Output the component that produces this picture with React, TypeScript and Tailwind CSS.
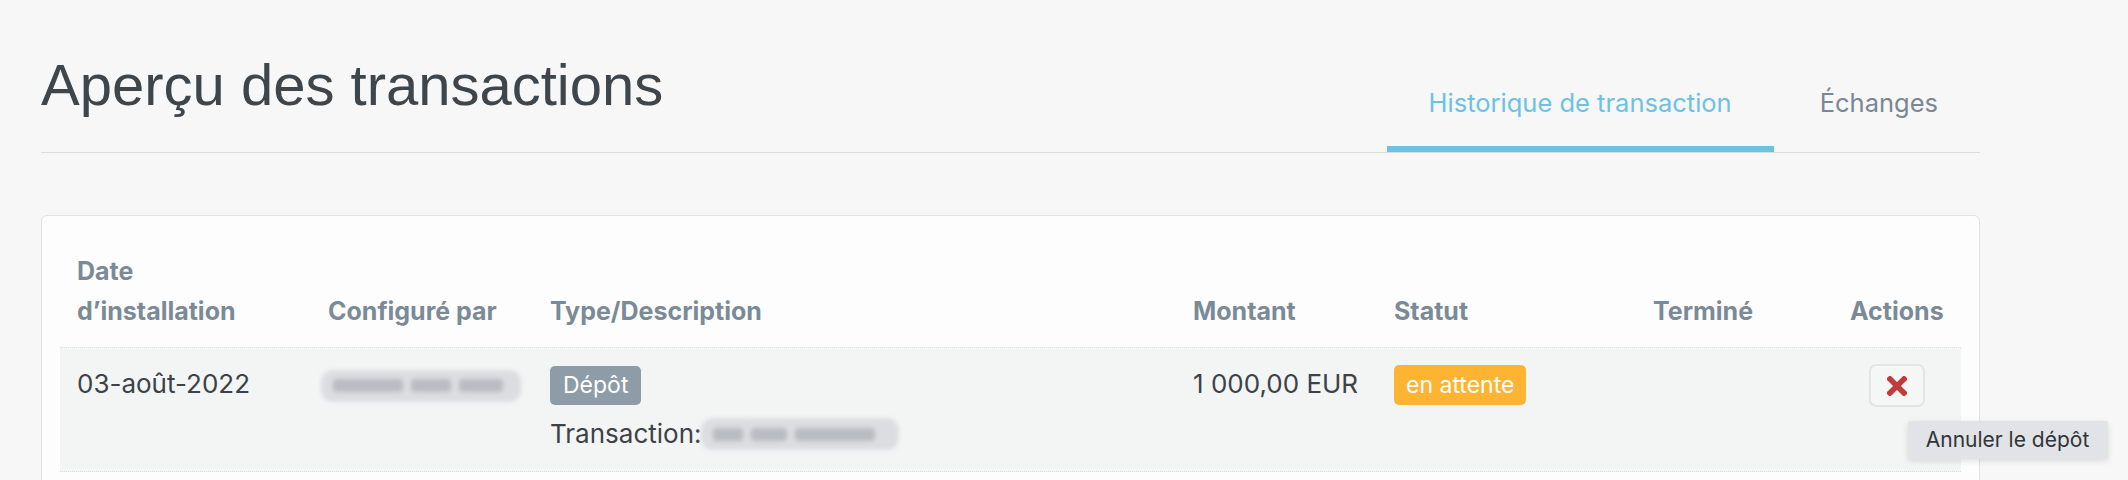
import React from "react";

function Blur({ w, bars }: { w: number; bars: number[] }) {
  return (
    <div className="relative inline-block align-middle" style={{ width: w, height: 32 }}>
      <div className="absolute inset-0 rounded-[12px] bg-[#dcdde0] blur-[2px]" />
      <div className="absolute inset-0 flex items-center gap-[8px] px-[12px]">
        {bars.map((b, i) => (
          <div key={i} className="h-[13px] rounded-[4px] bg-[#b9bcc1] blur-[2px]" style={{ width: b }} />
        ))}
      </div>
    </div>
  );
}

function CrossIcon() {
  return (
    <svg width="20" height="20" viewBox="0 0 20 20" aria-hidden="true">
      <path d="M3 3 L17 17 M17 3 L3 17" stroke="#c23a3a" strokeWidth="5.5" strokeLinecap="square" />
    </svg>
  );
}

export default function App() {
  const cols = "grid grid-cols-[251px_222px_643px_201px_259px_197px_127px]";
  return (
    <div className="min-h-screen bg-[#f7f7f7] pl-[41px] pr-[148px] pb-[40px] font-['Inter',sans-serif]">
      <div className="flex h-[153px] items-end justify-between border-b border-[#dcdcdc]">
        <h1 className="pb-[38px] font-['Liberation_Sans',sans-serif] text-[58px] font-normal leading-[58px] text-[#3e454b]">
          Aperçu des transactions
        </h1>
        <div className="flex gap-[4px] text-[25.5px] leading-[32px]">
          <div className="border-b-[6px] border-[#6ec1e4] px-[42px] pb-[27px] text-[#6ec1e4]">
            Historique de transaction
          </div>
          <div className="border-b-[6px] border-transparent px-[42px] pb-[27px] text-[#7a8794]">Échanges</div>
        </div>
      </div>

      <div className="mt-[62px] rounded-[6px] border border-[#e2e2e2] bg-[#fdfdfd] p-[18px] pb-[60px]">
        <div className={`${cols} items-end text-[25px] font-bold leading-[40px] text-[#7b8a97]`}>
          <div className="px-[17px] pb-[16px] pt-[17px]">
            <div>Date</div>
            <div>d’installation</div>
          </div>
          <div className="px-[17px] pb-[16px] pt-[17px]">Configuré par</div>
          <div className="px-[17px] pb-[16px] pt-[17px]">Type/Description</div>
          <div className="px-[17px] pb-[16px] pt-[17px]">Montant</div>
          <div className="px-[17px] pb-[16px] pt-[17px]">Statut</div>
          <div className="px-[17px] pb-[16px] pt-[17px]">Terminé</div>
          <div className="px-[17px] pb-[16px] pt-[17px] text-center">Actions</div>
        </div>

        <div
          className={`${cols} items-start border-y border-dotted border-[#dcdcdc] bg-[#f3f5f5] text-[26px] leading-[40px] text-[#3c4248]`}
        >
          <div className="px-[17px] pb-[16px] pt-[16px]">03-août-2022</div>
          <div className="px-[10px] pb-[16px] pt-[16px]">
            <Blur w={200} bars={[70, 40, 44]} />
          </div>
          <div className="px-[17px] pb-[17px] pt-[16px]">
            <span className="inline-block rounded-[5px] bg-[#8d9ca7] px-[13px] text-[23px] leading-[39px] text-white">
              Dépôt
            </span>
            <div className="mt-[9px] flex items-center">
              <span>Transaction:</span>
              <Blur w={198} bars={[30, 36, 80]} />
            </div>
          </div>
          <div className="px-[17px] pb-[16px] pt-[16px]">1 000,00 EUR</div>
          <div className="px-[17px] pb-[16px] pt-[16px]">
            <span className="inline-block rounded-[5px] bg-[#fdb432] px-[12px] text-[23px] leading-[40px] text-white">
              en attente
            </span>
          </div>
          <div className="px-[17px] pb-[16px] pt-[16px]" />
          <div className="flex justify-center px-[17px] pb-[16px] pt-[16px]">
            <div className="relative">
              <button className="flex h-[43px] w-[56px] items-center justify-center rounded-[7px] border-2 border-[#e3e4e5] bg-[#f5f6f6]">
                <CrossIcon />
              </button>
              <div className="absolute left-[39px] top-[57px] z-10 flex h-[38px] w-[200px] items-center justify-center rounded-[3px] bg-[#e2e3e6] text-[21px] leading-[38px] text-[#2f353a] shadow-[0_2px_6px_rgba(0,0,0,0.12)]">
                Annuler le dépôt
              </div>
            </div>
          </div>
        </div>
      </div>
    </div>
  );
}
